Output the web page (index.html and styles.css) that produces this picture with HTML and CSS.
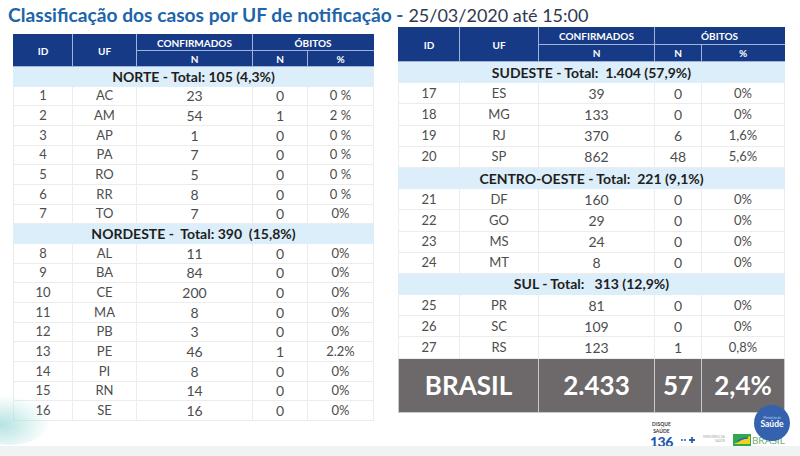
FILE: index.html
```html
<!DOCTYPE html>
<html lang="pt-BR">
<head>
<meta charset="utf-8">
<title>Classificação dos casos por UF de notificação</title>
<link rel="stylesheet" href="styles.css">
</head>
<body>
<div class="slide">
  <h1 class="title"><span class="title-main">Classificação dos casos por UF de notificação -</span> <span class="title-date">25/03/2020 até 15:00</span></h1>
  <div class="tables">
    <table class="uf-table left">
      <colgroup><col class="c-id"><col class="c-uf"><col class="c-conf"><col class="c-n"><col class="c-pct"></colgroup>
      <thead>
        <tr class="h1"><th rowspan="2">ID</th><th rowspan="2">UF</th><th>CONFIRMADOS</th><th colspan="2">ÓBITOS</th></tr>
        <tr class="h2"><th>N</th><th>N</th><th>%</th></tr>
      </thead>
      <tbody>
        <tr class="region"><td colspan="5">NORTE - Total: 105 (4,3%)</td></tr>
        <tr><td>1</td><td>AC</td><td class="num">23</td><td class="num">0</td><td>0 %</td></tr>
        <tr><td>2</td><td>AM</td><td class="num">54</td><td class="num">1</td><td>2 %</td></tr>
        <tr><td>3</td><td>AP</td><td class="num">1</td><td class="num">0</td><td>0 %</td></tr>
        <tr><td>4</td><td>PA</td><td class="num">7</td><td class="num">0</td><td>0 %</td></tr>
        <tr><td>5</td><td>RO</td><td class="num">5</td><td class="num">0</td><td>0 %</td></tr>
        <tr><td>6</td><td>RR</td><td class="num">8</td><td class="num">0</td><td>0 %</td></tr>
        <tr><td>7</td><td>TO</td><td class="num">7</td><td class="num">0</td><td>0%</td></tr>
        <tr class="region"><td colspan="5">NORDESTE -&nbsp; Total: 390&nbsp; (15,8%)</td></tr>
        <tr><td>8</td><td>AL</td><td class="num">11</td><td class="num">0</td><td>0%</td></tr>
        <tr><td>9</td><td>BA</td><td class="num">84</td><td class="num">0</td><td>0%</td></tr>
        <tr><td>10</td><td>CE</td><td class="num">200</td><td class="num">0</td><td>0%</td></tr>
        <tr><td>11</td><td>MA</td><td class="num">8</td><td class="num">0</td><td>0%</td></tr>
        <tr><td>12</td><td>PB</td><td class="num">3</td><td class="num">0</td><td>0%</td></tr>
        <tr><td>13</td><td>PE</td><td class="num">46</td><td class="num">1</td><td>2.2%</td></tr>
        <tr><td>14</td><td>PI</td><td class="num">8</td><td class="num">0</td><td>0%</td></tr>
        <tr><td>15</td><td>RN</td><td class="num">14</td><td class="num">0</td><td>0%</td></tr>
        <tr><td>16</td><td>SE</td><td class="num">16</td><td class="num">0</td><td>0%</td></tr>
      </tbody>
    </table>

    <table class="uf-table right">
      <colgroup><col class="c-id"><col class="c-uf"><col class="c-conf"><col class="c-n"><col class="c-pct"></colgroup>
      <thead>
        <tr class="h1"><th rowspan="2">ID</th><th rowspan="2">UF</th><th>CONFIRMADOS</th><th colspan="2">ÓBITOS</th></tr>
        <tr class="h2"><th>N</th><th>N</th><th>%</th></tr>
      </thead>
      <tbody>
        <tr class="region"><td colspan="5">SUDESTE - Total:&nbsp; 1.404 (57,9%)</td></tr>
        <tr><td>17</td><td>ES</td><td class="num">39</td><td class="num">0</td><td>0%</td></tr>
        <tr><td>18</td><td>MG</td><td class="num">133</td><td class="num">0</td><td>0%</td></tr>
        <tr><td>19</td><td>RJ</td><td class="num">370</td><td class="num">6</td><td>1,6%</td></tr>
        <tr><td>20</td><td>SP</td><td class="num">862</td><td class="num">48</td><td>5,6%</td></tr>
        <tr class="region"><td colspan="5">CENTRO-OESTE - Total:&nbsp; 221 (9,1%)</td></tr>
        <tr><td>21</td><td>DF</td><td class="num">160</td><td class="num">0</td><td>0%</td></tr>
        <tr><td>22</td><td>GO</td><td class="num">29</td><td class="num">0</td><td>0%</td></tr>
        <tr><td>23</td><td>MS</td><td class="num">24</td><td class="num">0</td><td>0%</td></tr>
        <tr><td>24</td><td>MT</td><td class="num">8</td><td class="num">0</td><td>0%</td></tr>
        <tr class="region"><td colspan="5">SUL - Total:&nbsp;&nbsp; 313 (12,9%)</td></tr>
        <tr><td>25</td><td>PR</td><td class="num">81</td><td class="num">0</td><td>0%</td></tr>
        <tr><td>26</td><td>SC</td><td class="num">109</td><td class="num">0</td><td>0%</td></tr>
        <tr><td>27</td><td>RS</td><td class="num">123</td><td class="num">1</td><td>0,8%</td></tr>
        <tr class="total"><td colspan="2">BRASIL</td><td>2.433</td><td>57</td><td>2,4%</td></tr>
      </tbody>
    </table>
  </div>

  <div class="swirl"></div>

  <div class="logos">
    <div class="disque">
      <span class="d-small">DISQUE</span>
      <span class="d-small">SAÚDE</span>
      <span class="d-num">136</span>
    </div>
    <svg class="arrow" width="14" height="8" viewBox="0 0 14 8"><path d="M0 4h6" stroke="#2b5fb3" stroke-width="1.6" stroke-dasharray="2 1"/><path d="M8 4h6M11 1v6" stroke="#2b5fb3" stroke-width="1.8"/></svg>
    <div class="ministerio"><span>MINISTÉRIO DA</span><span>SAÚDE</span></div>
    <div class="gov">
      <svg width="18" height="12" viewBox="0 0 18 12"><rect width="18" height="12" fill="#2fa84f"/><path d="M1 10L17 2V10Z" fill="#f4d21c"/><path d="M4 8C7 5 11 4 15 4" stroke="#2a63b7" stroke-width="1.6" fill="none"/></svg>
      <span class="gov-text">BRASIL</span>
    </div>
  </div>
  <div class="saude-badge"><span class="sb-small">Ministério da</span><span class="sb-main">Saúde</span></div>
  <div class="bottom-band"></div>
</div>
</body>
</html>
```

FILE: styles.css
```css
* { box-sizing: border-box; }

html, body {
  margin: 0;
  padding: 0;
  background: #ffffff;
}

.slide {
  position: relative;
  width: 800px;
  height: 456px;
  overflow: hidden;
  font-family: "Lato", "Open Sans", sans-serif;
  color: #4a4a4a;
}

.title {
  margin: 0;
  padding: 2px 0 0 8px;
  font-size: 19.2px;
  line-height: 26px;
  font-weight: 400;
  white-space: nowrap;
}

.title-main {
  font-weight: 700;
  color: #2064aa;
}

.title-date {
  color: #2e3a4e;
  font-size: 18px;
}

.tables {
  display: flex;
  align-items: flex-start;
  padding-left: 13px;
  gap: 24px;
}

.uf-table {
  border-collapse: collapse;
  table-layout: fixed;
  text-align: center;
}

.uf-table.left {
  width: 360px;
  margin-top: 6px;
}

.uf-table.right {
  width: 386px;
  margin-top: -1px;
}

.left .c-id { width: 59px; }
.left .c-uf { width: 64px; }
.left .c-conf { width: 116px; }
.left .c-n { width: 55px; }
.left .c-pct { width: 66px; }

.right .c-id { width: 61px; }
.right .c-uf { width: 79px; }
.right .c-conf { width: 116px; }
.right .c-n { width: 47px; }
.right .c-pct { width: 83px; }

.uf-table th {
  background: #173a86;
  color: #ffffff;
  font-size: 10px;
  font-weight: 700;
  border: 1px solid #9fb4d8;
  padding: 0;
  height: 16px;
  line-height: 14px;
}

.uf-table thead tr:first-child th {
  border-top-color: #173a86;
}

.uf-table thead th:first-child {
  border-left-color: #173a86;
}

.uf-table thead tr:first-child th:last-child,
.uf-table thead tr.h2 th:last-child {
  border-right-color: #173a86;
}

.right th {
  height: 17px;
}

.uf-table td {
  border: 1px solid #ececec;
  padding: 0;
  font-size: 13px;
  height: 19.67px;
  line-height: 17px;
  color: #4d4d4d;
}

.uf-table td.num {
  font-size: 14px;
}

.right td {
  height: 21.2px;
}

.uf-table tr.region td {
  background: #dceef9;
  color: #1e1e1e;
  font-weight: 700;
  font-size: 14px;
  border-color: #dceef9;
}

.uf-table tr.total td {
  background: #6d696a;
  color: #ffffff;
  font-weight: 700;
  font-size: 26px;
  height: 54px;
  border: 1px solid #c9c9c9;
}

.swirl {
  position: absolute;
  left: -30px;
  top: 395px;
  width: 80px;
  height: 50px;
  border-radius: 50%;
  background: radial-gradient(ellipse at 40% 60%, rgba(120, 205, 200, 0.55), rgba(170, 225, 222, 0.25) 50%, rgba(255, 255, 255, 0) 72%);
}

.logos {
  position: absolute;
  left: 650px;
  top: 421px;
  display: flex;
  align-items: flex-end;
  gap: 8px;
}

.disque {
  display: flex;
  flex-direction: column;
  align-items: center;
  line-height: 1;
  gap: 1px;
}

.d-small {
  font-size: 5px;
  line-height: 6px;
  font-weight: 700;
  color: #3a3a3a;
}

.d-num {
  font-size: 14px;
  line-height: 13px;
  font-weight: 900;
  color: #1f5bb0;
  letter-spacing: -0.5px;
}

.arrow {
  margin-bottom: 4px;
}

.ministerio {
  display: flex;
  flex-direction: column;
  align-items: flex-end;
  font-size: 3px;
  color: #a0a0a0;
  margin-bottom: 4px;
  line-height: 1.3;
}

.gov {
  display: flex;
  align-items: center;
  gap: 1px;
  margin-bottom: 2px;
}

.gov-text {
  font-size: 10px;
  color: #6fae7a;
  font-weight: 400;
}

.saude-badge {
  position: absolute;
  left: 754px;
  top: 405px;
  width: 36px;
  height: 36px;
  border-radius: 50%;
  background: #3462ae;
  display: flex;
  flex-direction: column;
  align-items: center;
  justify-content: center;
  color: #ffffff;
  line-height: 1;
}

.sb-small {
  font-size: 3px;
  color: #c8d6ee;
}

.sb-main {
  font-size: 8.5px;
  font-weight: 700;
}

.bottom-band {
  position: absolute;
  left: 0;
  right: 0;
  bottom: 0;
  height: 10px;
  background: #f1f2f3;
}
```
